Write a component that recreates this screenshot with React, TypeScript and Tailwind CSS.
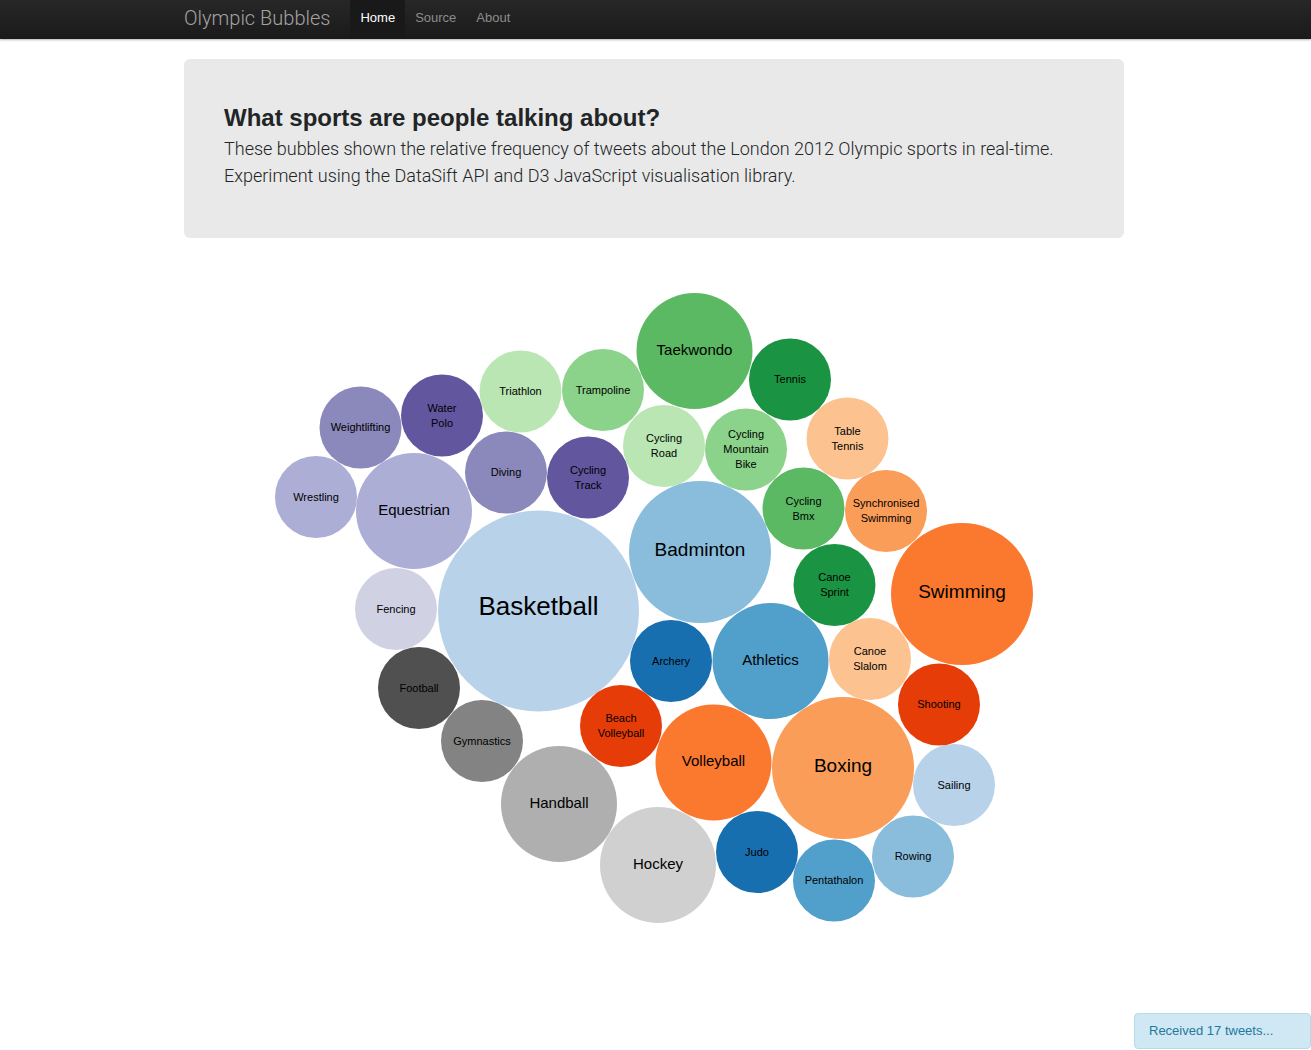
type Bubble = {
  label: string[];
  x: number;
  y: number;
  tweets: 1 | 2 | 3 | 6;
  fill: string;
};

const SIZES = {
  1: { radius: 41, font: 11 },
  2: { radius: 58, font: 15 },
  3: { radius: 71, font: 19 },
  6: { radius: 100.5, font: 26 },
};

const LINE_HEIGHT = 15;
const BASELINE_SHIFT = 3.5;

const BUBBLES: Bubble[] = [
  { label: ["Archery"], x: 487, y: 393, tweets: 1, fill: "#186fb0" },
  { label: ["Athletics"], x: 586.5, y: 393, tweets: 2, fill: "#519fcb" },
  { label: ["Badminton"], x: 516, y: 284, tweets: 3, fill: "#89bddb" },
  { label: ["Basketball"], x: 354.5, y: 343, tweets: 6, fill: "#b8d2ea" },
  { label: ["Beach", "Volleyball"], x: 437, y: 458, tweets: 1, fill: "#e63d08" },
  { label: ["Volleyball"], x: 529.5, y: 494.5, tweets: 2, fill: "#fb782f" },
  { label: ["Boxing"], x: 659, y: 500, tweets: 3, fill: "#fa9d59" },
  { label: ["Canoe", "Slalom"], x: 686, y: 391, tweets: 1, fill: "#fcc390" },
  { label: ["Canoe", "Sprint"], x: 650.5, y: 317, tweets: 1, fill: "#1a9442" },
  { label: ["Cycling", "Bmx"], x: 619.5, y: 240.5, tweets: 1, fill: "#5ab962" },
  { label: ["Cycling", "Mountain", "Bike"], x: 562, y: 181.5, tweets: 1, fill: "#8bd38a" },
  { label: ["Cycling", "Road"], x: 480, y: 178, tweets: 1, fill: "#b9e6b2" },
  { label: ["Cycling", "Track"], x: 404, y: 209.5, tweets: 1, fill: "#62569f" },
  { label: ["Diving"], x: 322, y: 204.5, tweets: 1, fill: "#8b88bb" },
  { label: ["Equestrian"], x: 230, y: 243, tweets: 2, fill: "#adaed5" },
  { label: ["Fencing"], x: 212, y: 341, tweets: 1, fill: "#d1d1e4" },
  { label: ["Football"], x: 235, y: 420, tweets: 1, fill: "#505050" },
  { label: ["Gymnastics"], x: 298, y: 473, tweets: 1, fill: "#838383" },
  { label: ["Handball"], x: 375, y: 536, tweets: 2, fill: "#afafaf" },
  { label: ["Hockey"], x: 474, y: 597, tweets: 2, fill: "#d0d0d0" },
  { label: ["Judo"], x: 573, y: 584, tweets: 1, fill: "#186fb0" },
  { label: ["Pentathalon"], x: 650, y: 612.5, tweets: 1, fill: "#519fcb" },
  { label: ["Rowing"], x: 729, y: 588.5, tweets: 1, fill: "#89bddb" },
  { label: ["Sailing"], x: 770, y: 517, tweets: 1, fill: "#b8d2ea" },
  { label: ["Shooting"], x: 755, y: 436.5, tweets: 1, fill: "#e63d08" },
  { label: ["Swimming"], x: 778, y: 326, tweets: 3, fill: "#fb782f" },
  { label: ["Synchronised", "Swimming"], x: 702, y: 243, tweets: 1, fill: "#fa9d59" },
  { label: ["Table", "Tennis"], x: 663.5, y: 170.5, tweets: 1, fill: "#fcc390" },
  { label: ["Taekwondo"], x: 510.5, y: 83, tweets: 2, fill: "#5ab962" },
  { label: ["Tennis"], x: 606, y: 111.5, tweets: 1, fill: "#1a9442" },
  { label: ["Trampoline"], x: 419, y: 122, tweets: 1, fill: "#8bd38a" },
  { label: ["Triathlon"], x: 336.5, y: 123.5, tweets: 1, fill: "#b9e6b2" },
  { label: ["Water", "Polo"], x: 258, y: 147.5, tweets: 1, fill: "#62569f" },
  { label: ["Weightlifting"], x: 176.5, y: 159.5, tweets: 1, fill: "#8b88bb" },
  { label: ["Wrestling"], x: 132, y: 229, tweets: 1, fill: "#adaed5" },
];

const NAV = [
  { name: "Home", active: true },
  { name: "Source", active: false },
  { name: "About", active: false },
];

function Navbar() {
  return (
    <header className="bg-linear-to-b from-[#272727] to-[#1a1a1a] pr-[3px] shadow-[0_1px_2px_rgba(0,0,0,0.3)]">
      <div className="mx-auto flex h-[39px] max-w-[940px] items-stretch">
        <a
          href="#"
          className="flex items-center pr-5 pb-1 font-[Roboto,sans-serif] text-[20px] leading-5 font-light text-[#a3a3a3]"
        >
          Olympic Bubbles
        </a>
        <nav className="flex items-stretch text-[13px] leading-[18px]">
          {NAV.map((item) => (
            <a
              key={item.name}
              href={"#" + item.name.toLowerCase()}
              aria-current={item.active ? "page" : undefined}
              className={
                item.active
                  ? "flex items-center bg-[#191919] px-2.5 pb-1 text-white"
                  : "flex items-center px-2.5 pb-1 text-[#8c8c8c]"
              }
            >
              {item.name}
            </a>
          ))}
        </nav>
      </div>
    </header>
  );
}

function BubbleChart() {
  return (
    <svg
      viewBox="0 0 940 700"
      role="img"
      aria-label="Tweets per Olympic sport"
      className="block w-full"
    >
      {BUBBLES.map((bubble) => {
        const { radius, font } = SIZES[bubble.tweets];
        const first = bubble.y + BASELINE_SHIFT - ((bubble.label.length - 1) * LINE_HEIGHT) / 2;
        return (
          <g key={bubble.label.join(" ")}>
            <circle cx={bubble.x} cy={bubble.y} r={radius} fill={bubble.fill} />
            <text textAnchor="middle" fontSize={font} fill="#000">
              {bubble.label.map((line, i) => (
                <tspan key={line} x={bubble.x} y={first + i * LINE_HEIGHT}>
                  {line}
                </tspan>
              ))}
            </text>
          </g>
        );
      })}
    </svg>
  );
}

export default function App() {
  return (
    <div className="bg-white font-['Liberation_Sans',Arial,sans-serif]">
      <Navbar />
      <main className="pt-5 pr-[3px]">
        <div className="mx-auto max-w-[940px]">
          <section className="mb-[30px] rounded-md bg-[#e9e9e9] px-10 pt-[45px] pb-[49px] text-[#222526]">
            <h1 className="text-[24px] leading-7 font-bold">What sports are people talking about?</h1>
            <p className="pt-[3px] font-[Roboto,sans-serif] text-[18px] leading-[27px] font-light">
              These bubbles shown the relative frequency of tweets about the London 2012 Olympic sports in real-time.
              <br />
              Experiment using the DataSift API and D3 JavaScript visualisation library.
            </p>
          </section>
          <BubbleChart />
        </div>
      </main>
      <div
        role="status"
        className="fixed right-0 bottom-px w-[177px] rounded border border-[#b4dde4] bg-[#cfe8f3] py-2 pl-3.5 text-[13px] leading-[18px] text-[#23789f]"
      >
        Received 17 tweets...
      </div>
    </div>
  );
}
